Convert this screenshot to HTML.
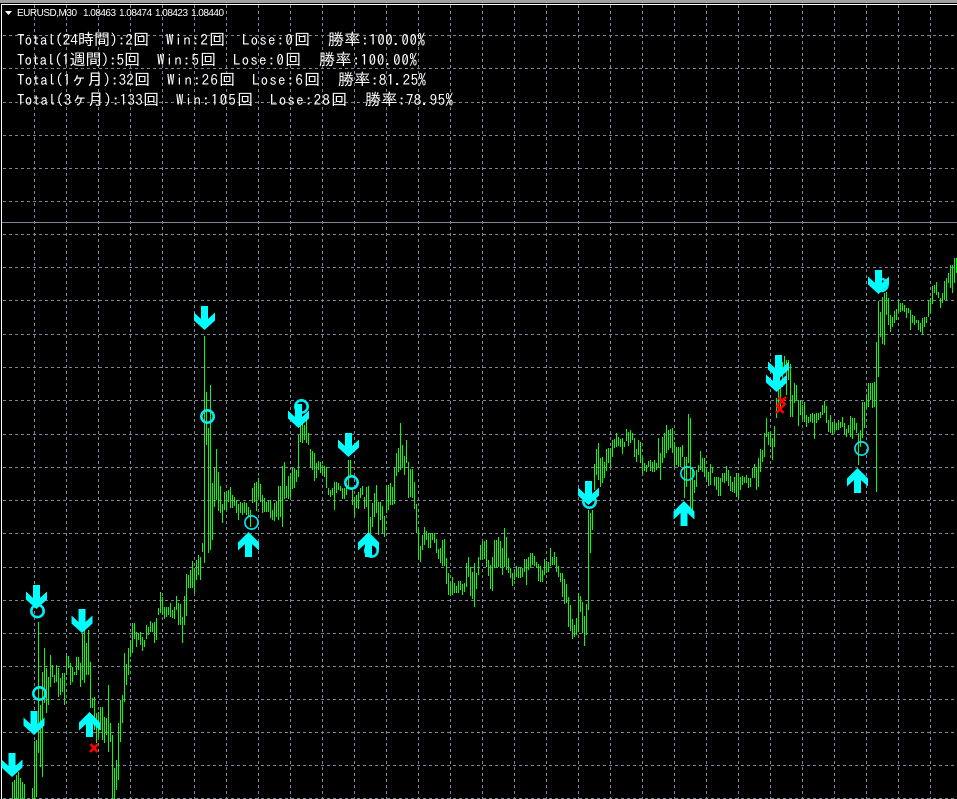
<!DOCTYPE html>
<html lang="ja">
<head>
<meta charset="utf-8">
<title>EURUSD,M30</title>
<style>
html,body{margin:0;padding:0;background:#000;}
#c{display:block;position:absolute;left:0;top:0;}
.t{font-family:"IPAGothic","Noto Sans CJK JP",monospace;font-size:15px;fill:#fff;}
.t tspan{font-size:16px;}
.h{font-family:"Liberation Sans",sans-serif;font-size:10px;fill:#fff;}
</style>
</head>
<body>
<svg id="c" width="957" height="799" viewBox="0 0 957 799" xmlns="http://www.w3.org/2000/svg">
<defs>
<path id="dn" d="M-3.5 -23H3.500V-10L10.500 -16.500V-8.500L0 1L-10.500 -8.500V-16.500L-3.500 -10Z" fill="#00ffff"/>
<path id="up" d="M-3.500 24H3.500V11L10.500 17.500V9.500L0 -1L-10.500 9.500V17.500L-3.500 11Z" fill="#00ffff"/>
</defs>
<rect width="957" height="799" fill="#000"/>
<rect x="0" y="0" width="957" height="3" fill="#a0a0a0"/>
<rect x="1" y="4" width="956" height="1" fill="#fff"/>
<rect x="1" y="4" width="1" height="795" fill="#fff"/>
<g stroke="#778899" stroke-width="1" stroke-dasharray="3 3" shape-rendering="crispEdges" fill="none">
<path d="M34.5 5V799M66.5 5V799M98.5 5V799M130.5 5V799M162.5 5V799M194.5 5V799M226.5 5V799M258.5 5V799M290.5 5V799M322.5 5V799M354.5 5V799M386.5 5V799M418.5 5V799M450.5 5V799M482.5 5V799M514.5 5V799M546.5 5V799M578.5 5V799M610.5 5V799M642.5 5V799M674.5 5V799M706.5 5V799M738.5 5V799M770.5 5V799M802.5 5V799M834.5 5V799M866.5 5V799M898.5 5V799M930.5 5V799"/>
<path d="M3 35.5H957M3 68.5H957M3 102.5H957M3 135.5H957M3 168.5H957M3 201.5H957M3 234.5H957M3 267.5H957M3 300.5H957M3 334.5H957M3 367.5H957M3 400.5H957M3 434.5H957M3 467.5H957M3 500.5H957M3 533.5H957M3 567.5H957M3 600.5H957M3 633.5H957M3 666.5H957M3 699.5H957M3 732.5H957M3 765.5H957M3 798.5H957"/>
</g>
<rect x="2" y="222" width="955" height="1" fill="#778899"/>
<path transform="translate(.5 0)" stroke="#00ff00" stroke-width="1" fill="none" shape-rendering="crispEdges" d="M12 782V799M14 780V799M16 775V799M18 772V799M20 778V799M22 782V799M24 784V799M32 788V799M34 741V799M36 740V797M38 622V753M40 705V767M42 672V777M44 648V703M46 668V713M48 677V705M50 655V687M52 665V677M54 675V683M56 665V682M58 668V697M60 678V695M62 673V692M64 673V705M66 656V675M68 656V668M70 663V685M72 667V682M74 672V675M76 657V675M78 657V670M80 663V687M82 633V680M84 630V683M86 643V675M88 630V675M90 662V708M92 698V708M94 697V730M96 713V743M98 712V737M100 707V730M102 707V740M104 717V743M106 718V735M108 685V752M110 723V742M112 735V799M114 768V799M116 760V790M118 723V780M120 700V742M122 695V723M124 653V702M126 664V685M128 648V675M130 640V657M132 623V653M134 623V639M136 632V647M138 633V640M140 632V645M142 637V651M144 640V647M146 625V639M148 627V635M150 621V632M152 623V632M154 622V643M156 618V640M158 608V615M160 592V613M162 597V615M164 607V619M166 607V617M168 607V615M170 603V617M172 610V618M174 607V619M176 596V610M178 603V625M180 604V625M182 617V643M184 596V625M186 574V616M188 575V588M190 570V588M192 561V588M194 568V593M196 560V580M198 555V575M200 557V580M202 543V552M204 336V563M206 392V445M208 428V553M210 385V550M212 483V540M214 468V507M216 449V500M218 472V511M220 486V513M222 504V523M224 492V510M226 492V510M228 490V502M230 487V508M232 495V508M234 497V506M236 500V513M238 504V520M240 502V513M242 503V515M244 502V513M246 503V515M248 507V517M250 510V527M252 488V503M254 483V502M256 482V511M258 478V497M260 484V502M262 495V513M264 498V512M266 502V512M268 500V512M270 500V518M272 510V520M274 503V521M276 501V517M278 486V520M280 486V517M282 466V527M284 462V499M286 486V498M288 476V499M290 473V497M292 468V489M294 468V488M296 470V482M298 435V477M300 423V442M302 422V443M304 425V440M306 420V443M308 433V445M310 449V468M312 451V470M314 453V481M316 463V478M318 461V470M320 462V473M322 465V475M324 466V477M326 467V488M328 488V495M330 490V497M332 488V495M334 482V510M336 482V493M338 483V490M340 486V491M342 488V499M344 488V499M346 487V495M348 460V487M350 460V477M352 490V505M354 497V517M356 495V508M358 492V509M360 488V498M362 486V495M364 497V509M366 487V507M368 486V533M370 517V533M372 503V527M374 493V517M376 485V513M378 502V535M380 502V520M382 506V533M384 516V537M386 485V513M388 485V510M390 483V505M392 487V505M394 468V504M396 453V476M398 448V472M400 423V470M402 445V468M404 456V475M406 440V463M408 462V498M410 469V497M412 469V498M414 482V509M416 504V533M418 530V559M420 546V562M422 535V550M424 527V545M426 531V540M428 533V548M430 533V548M432 533V540M434 533V543M436 539V553M438 549V559M440 548V563M442 540V566M444 539V566M446 558V584M448 573V595M450 583V596M452 577V595M454 583V593M456 586V593M458 581V593M460 581V590M462 584V595M464 583V592M466 563V587M468 557V577M470 567V596M472 572V599M474 563V607M476 573V589M478 557V575M480 545V560M482 542V560M484 541V559M486 540V567M488 560V576M490 565V589M492 557V591M494 540V568M496 540V568M498 537V567M500 541V568M502 548V575M504 528V567M506 537V570M508 558V573M510 568V578M512 573V586M514 572V580M516 566V577M518 567V578M520 568V578M522 568V577M524 559V572M526 559V585M528 557V570M530 553V568M532 553V565M534 556V566M536 562V568M538 564V581M540 566V582M542 570V582M544 559V575M546 561V573M548 562V572M550 548V566M552 557V565M554 552V565M556 557V572M558 566V577M560 573V582M562 573V597M564 579V604M566 584V603M568 597V627M570 605V631M572 619V639M574 625V637M576 618V635M578 593V632M580 596V612M582 602V633M584 616V646M586 604V635M588 510V610M590 513V553M592 510V530M594 464V490M596 449V475M598 443V480M600 458V487M602 457V483M604 462V478M606 449V471M608 448V463M610 448V468M612 440V457M614 439V448M616 433V447M618 437V446M620 439V447M622 438V454M624 442V447M626 429V441M628 432V446M630 430V443M632 433V440M634 438V457M636 449V462M638 440V455M640 442V463M642 457V475M644 463V471M646 465V472M648 461V467M650 460V471M652 462V472M654 460V472M656 463V470M658 438V467M660 453V480M662 437V463M664 433V458M666 425V453M668 430V450M670 429V448M672 428V453M674 442V467M676 447V465M678 447V467M680 447V467M682 445V457M684 457V498M686 457V487M688 414V463M690 418V510M692 467V510M694 480V493M696 470V487M698 465V472M700 451V470M702 458V472M704 458V477M706 470V480M708 472V486M710 464V485M712 467V473M714 477V486M716 477V490M718 477V496M720 478V496M722 473V482M724 473V483M726 466V481M728 470V486M730 476V491M732 482V492M734 477V493M736 473V497M738 473V499M740 477V490M742 476V485M744 477V483M746 475V483M748 478V488M750 478V487M752 468V478M754 464V478M756 467V490M758 458V487M760 449V472M762 450V462M764 433V457M766 418V437M768 432V445M770 432V447M772 438V460M774 426V447M776 398V418M778 387V407M780 387V410M782 362V387M784 356V373M786 360V395M788 360V380M790 364V417M792 395V417M794 383V403M796 385V400M798 400V426M800 400V415M802 405V420M804 402V422M806 415V427M808 417V423M810 414V422M812 413V423M814 414V439M816 413V423M818 413V420M820 412V418M822 405V415M824 401V413M826 406V423M828 420V432M830 415V433M832 422V435M834 422V432M836 423V430M838 420V430M840 422V428M842 417V427M844 423V435M846 429V437M848 425V433M850 416V437M852 418V439M854 418V430M856 423V433M858 433V465M860 430V447M862 402V438M864 402V428M866 394V408M868 383V407M870 383V400M872 383V408M874 382V407M876 342V492M878 301V377M880 312V337M882 297V344M884 293V345M886 292V315M888 298V325M890 315V332M892 317V327M894 311V323M896 309V320M898 299V312M900 303V312M902 303V311M904 305V312M906 308V318M908 308V313M910 310V330M912 315V323M914 316V325M916 320V323M918 320V330M920 323V332M922 318V335M924 317V327M926 317V323M928 300V317M930 298V313M932 286V304M934 285V293M936 282V295M938 292V298M940 298V308M942 293V303M944 281V300M946 278V300M948 273V283M950 265V288M952 265V293M954 258V283M956 258V273"/>
<g fill="none" stroke="#00eef5" stroke-width="2.600">
<circle cx="37.5" cy="611" r="6.200"/>
<circle cx="39.5" cy="693.5" r="6.200"/>
<circle cx="207.5" cy="416.5" r="6.200"/>
<circle cx="301.5" cy="406.5" r="6.200"/>
<circle cx="351.5" cy="482.5" r="6.200"/>
<circle cx="371.5" cy="550.5" r="6.200"/>
<circle cx="589.5" cy="501.5" r="6.200"/>
<circle cx="881.5" cy="285" r="6"/>
</g>
<g fill="none" stroke="#00e6f0" stroke-width="1.700">
<circle cx="251.5" cy="522.5" r="6.600"/>
<circle cx="687.5" cy="473.5" r="6.600"/>
<circle cx="861.5" cy="448.5" r="6.600"/>
</g>
<use href="#dn" x="36.5" y="608"/>
<use href="#dn" x="82" y="632"/>
<use href="#dn" x="34" y="734"/>
<use href="#dn" x="12" y="776"/>
<use href="#dn" x="204.5" y="329"/>
<use href="#dn" x="298.5" y="427"/>
<use href="#dn" x="348.5" y="456"/>
<use href="#dn" x="588.5" y="504"/>
<use href="#dn" x="778.5" y="378"/>
<use href="#dn" x="776.5" y="391"/>
<use href="#dn" x="878.5" y="293"/>
<use href="#up" x="89.5" y="713"/>
<use href="#up" x="248.5" y="533"/>
<use href="#up" x="368.5" y="533"/>
<use href="#up" x="684" y="502"/>
<use href="#up" x="857.5" y="469"/>
<g stroke="#ff0000" stroke-width="2.600" fill="none">
<path d="M90 752L98 744M90.500 744L97.500 752"/>
<path d="M778 405L786 397M778.500 397L785.500 405"/>
<path d="M776 413L784 405M776.500 405L783.500 413"/>
</g>
<path d="M5 11H12L8.500 15Z" fill="#fff"/>
<text class="h" x="17" y="16" textLength="60" lengthAdjust="spacing">EURUSD,M30</text>
<text class="h" x="83" y="16" textLength="33" lengthAdjust="spacing">1.08463</text>
<text class="h" x="119" y="16" textLength="33" lengthAdjust="spacing">1.08474</text>
<text class="h" x="155" y="16" textLength="33" lengthAdjust="spacing">1.08423</text>
<text class="h" x="191" y="16" textLength="33" lengthAdjust="spacing">1.08440</text>
<text class="t" x="17" y="45" textLength="132" lengthAdjust="spacing">Total(24<tspan>時間</tspan>):2<tspan>回</tspan></text>
<text class="t" x="166" y="45" textLength="59" lengthAdjust="spacing">Win:2<tspan>回</tspan></text>
<text class="t" x="242" y="45" textLength="68" lengthAdjust="spacing">Lose:0<tspan>回</tspan></text>
<text class="t" x="328" y="45" textLength="97" lengthAdjust="spacing"><tspan>勝率</tspan>:100.00%</text>
<text class="t" x="17" y="65" textLength="123" lengthAdjust="spacing">Total(1<tspan>週間</tspan>):5<tspan>回</tspan></text>
<text class="t" x="157" y="65" textLength="59" lengthAdjust="spacing">Win:5<tspan>回</tspan></text>
<text class="t" x="233" y="65" textLength="68" lengthAdjust="spacing">Lose:0<tspan>回</tspan></text>
<text class="t" x="319" y="65" textLength="98" lengthAdjust="spacing"><tspan>勝率</tspan>:100.00%</text>
<text class="t" x="17" y="85" textLength="133" lengthAdjust="spacing">Total(1<tspan>ヶ月</tspan>):32<tspan>回</tspan></text>
<text class="t" x="167" y="85" textLength="68" lengthAdjust="spacing">Win:26<tspan>回</tspan></text>
<text class="t" x="252" y="85" textLength="68" lengthAdjust="spacing">Lose:6<tspan>回</tspan></text>
<text class="t" x="338" y="85" textLength="88" lengthAdjust="spacing"><tspan>勝率</tspan>:81.25%</text>
<text class="t" x="17" y="105" textLength="142" lengthAdjust="spacing">Total(3<tspan>ヶ月</tspan>):133<tspan>回</tspan></text>
<text class="t" x="176" y="105" textLength="77" lengthAdjust="spacing">Win:105<tspan>回</tspan></text>
<text class="t" x="270" y="105" textLength="77" lengthAdjust="spacing">Lose:28<tspan>回</tspan></text>
<text class="t" x="365" y="105" textLength="88" lengthAdjust="spacing"><tspan>勝率</tspan>:78.95%</text>
</svg>
</body>
</html>
